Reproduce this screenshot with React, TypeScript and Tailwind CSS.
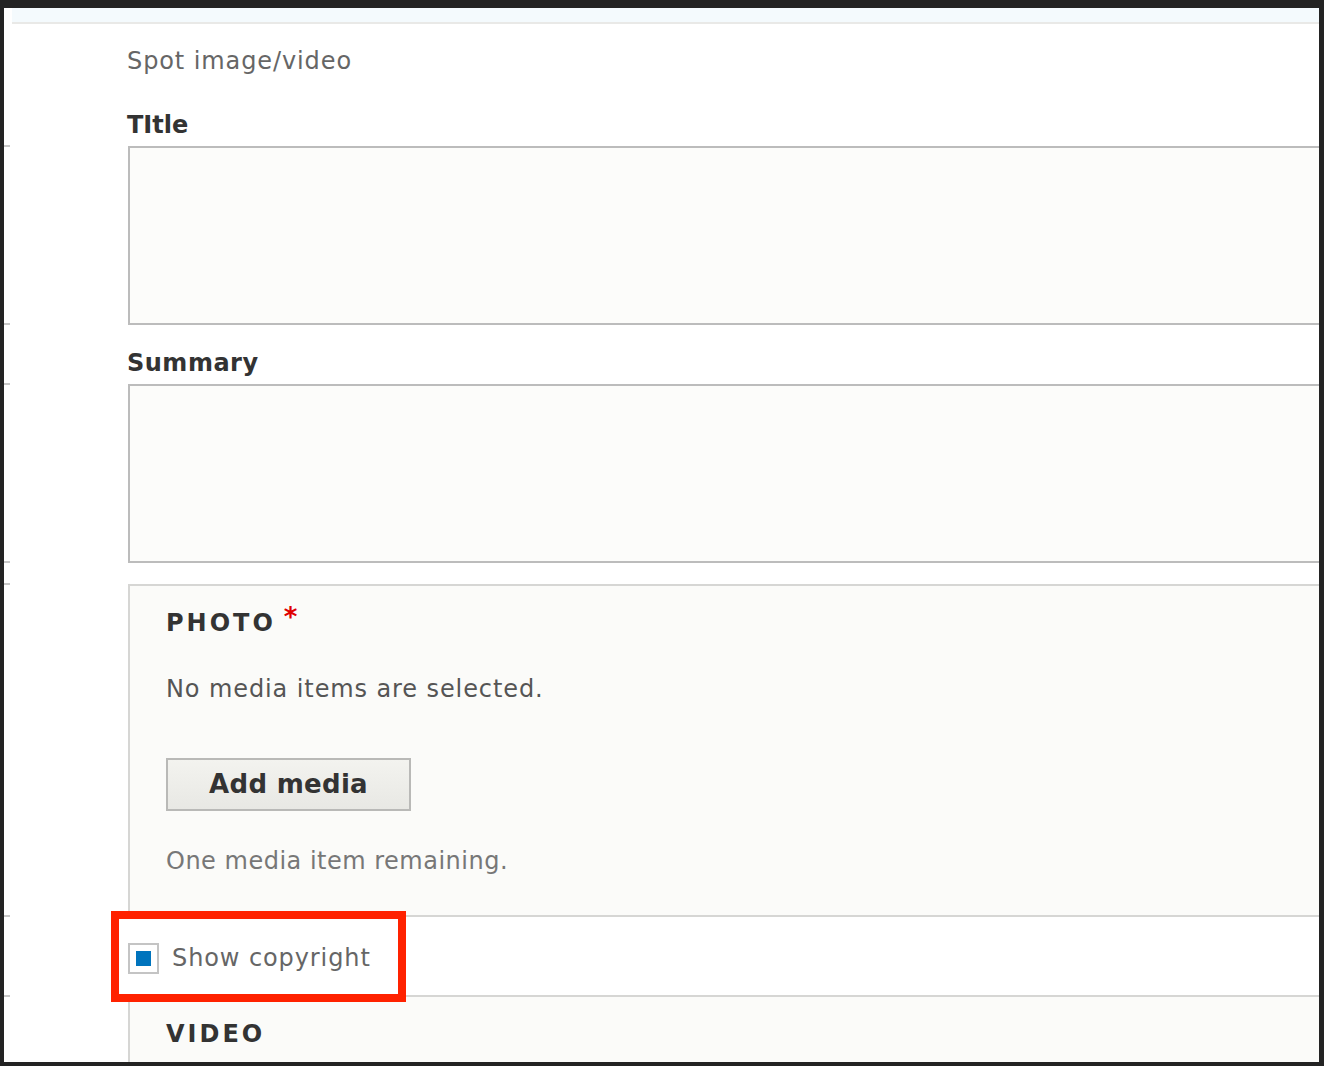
export default function App() {
  const font = { fontFamily: "'DejaVu Sans', Inter, sans-serif" };
  return (
    <div className="h-[1066px] w-[1324px] overflow-hidden bg-[#232323] pt-[8px] pl-[4px] pr-[5px] pb-[4px]" style={font}>
      <div className="relative flex h-full flex-col overflow-hidden bg-white">
        {/* top strip */}
        <div className="flex h-[16px] shrink-0">
          <div className="w-[8px] bg-white" />
          <div className="flex-1 border-b-2 border-[#e9e9e7] bg-[#f4fafd]" />
        </div>

        <div className="flex flex-1">
          {/* left gutter with ticks */}
          <div className="w-[123px] shrink-0">
            <div className="mt-[121px] h-[2px] w-[6px] bg-[#c8c8c8]" />
            <div className="mt-[176px] h-[2px] w-[6px] bg-[#c8c8c8]" />
            <div className="mt-[58px] h-[2px] w-[6px] bg-[#c8c8c8]" />
            <div className="mt-[176px] h-[2px] w-[6px] bg-[#c8c8c8]" />
            <div className="mt-[20px] h-[2px] w-[6px] bg-[#c8c8c8]" />
            <div className="mt-[330px] h-[2px] w-[6px] bg-[#c8c8c8]" />
            <div className="mt-[78px] h-[2px] w-[6px] bg-[#c8c8c8]" />
          </div>

          <div className="-mr-[20px] flex flex-1 flex-col">
            <div className="mt-[22px] text-[24px] leading-[30px] tracking-[0.9px] text-[#666]">Spot image/video</div>

            <div className="mt-[34px] text-[24px] font-bold leading-[30px] text-[#333]">TItle</div>
            <div className="ml-px mt-[6px] h-[179px] border-2 border-[#bcbcbc] bg-[#fcfcfa]" />

            <div className="mt-[23px] text-[24px] font-bold leading-[30px] tracking-[0.5px] text-[#333]">Summary</div>
            <div className="ml-px mt-[6px] h-[179px] border-2 border-[#bcbcbc] bg-[#fcfcfa]" />

            {/* photo widget */}
            <div className="ml-px mt-[21px] h-[333px] border-2 border-[#d6d6d4] bg-[#fbfbf9] pl-[36px]">
              <div className="mt-[22px] flex items-start text-[24px] font-bold leading-[30px] tracking-[3px] text-[#333]">
                PHOTO
                <span className="ml-[8px] -mt-[6px] text-[26px] tracking-normal text-[#e00000]">*</span>
              </div>
              <div className="mt-[36px] text-[24px] leading-[30px] tracking-[0.9px] text-[#555]">No media items are selected.</div>
              <button className="mt-[54px] flex h-[53px] w-[245px] items-center justify-center border-2 border-[#b9b9b7] bg-gradient-to-b from-[#f3f3ef] to-[#e8e8e4] text-[26px] font-bold tracking-[0.3px] text-[#333]">
                Add media
              </button>
              <div className="mt-[35px] text-[24px] leading-[30px] tracking-[0.5px] text-[#777]">One media item remaining.</div>
            </div>

            {/* copyright row */}
            <div className="flex h-[78px] items-center bg-white pt-[4px]">
              <div className="ml-px flex h-[31px] w-[31px] items-center justify-center border-2 border-[#c4c4c4] bg-white">
                <div className="h-[15px] w-[15px] bg-[#0074bd]" />
              </div>
              <span className="ml-[13px] text-[24px] tracking-[0.9px] text-[#666]">Show copyright</span>
            </div>

            {/* video widget */}
            <div className="ml-px flex-1 border-2 border-b-0 border-[#d6d6d4] bg-[#fbfbf9] pl-[36px]">
              <div className="mt-[22px] text-[24px] font-bold leading-[30px] tracking-[3px] text-[#333]">VIDEO</div>
            </div>
          </div>
        </div>

        {/* annotation highlight */}
        <div className="absolute left-[107px] top-[903px] h-[91px] w-[295px] border-[8px] border-[#ff2200]" />
      </div>
    </div>
  );
}
